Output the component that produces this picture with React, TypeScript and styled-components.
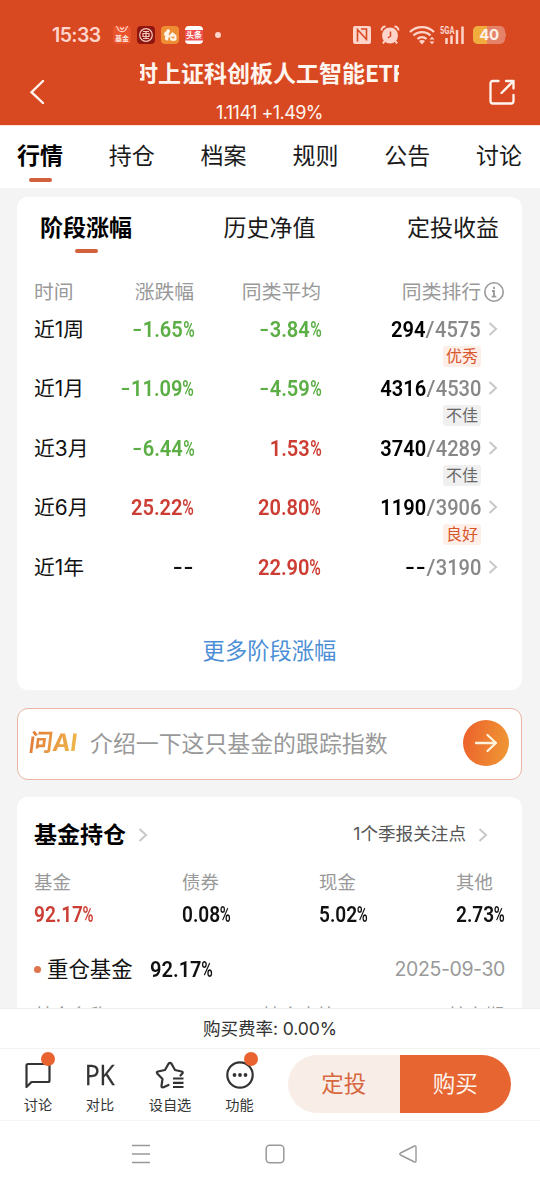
import React from "react";
import styled, { createGlobalStyle } from "styled-components";

const Global = createGlobalStyle`
  * { box-sizing: border-box; }
  body { margin: 0; background: #f4f4f4; font-family: Inter, "Noto Sans CJK SC", sans-serif; color: #111; }
  svg { display: block; flex: none; }
`;

const Screen = styled.div`
  width: 540px;
  height: 1187px;
  display: flex;
  flex-direction: column;
  overflow: hidden;
  white-space: nowrap;
`;

const Header = styled.header`
  height: 125px;
  flex: none;
  background: #d84922;
  color: #fff5ef;
`;
const StatusBar = styled.div`
  height: 56px;
  padding: 14px 33px 0 52px;
  display: flex;
  align-items: center;
  color: #ffd5cb;
`;
const Clock = styled.span`
  font: 600 19.5px/42px Inter, sans-serif;
  letter-spacing: -0.6px;
  width: 61px;
  padding-bottom: 1px;
`;
const AppIcons = styled.div`
  display: flex;
  align-items: center;
  gap: 6px;
`;
const StatusRight = styled.div`
  display: flex;
  align-items: center;
  margin-left: auto;
`;
const TitleBar = styled.div`
  height: 69px;
  padding: 0 25px 0 29px;
  display: flex;
  align-items: center;
  justify-content: space-between;
`;
const TitleBlock = styled.div`
  width: 259px;
  height: 69px;
  margin-left: 95px;
  margin-right: auto;
`;
const Title = styled.div`
  height: 34px;
  font: 700 23px/33px "Noto Sans CJK SC", sans-serif;
  overflow: hidden;
  text-indent: -5px;
`;
const Latin = styled.span`
  letter-spacing: -0.6px;
`;
const Quote = styled.div`
  padding-top: 5px;
  font-size: 18px;
  line-height: 35px;
  font-weight: 400;
  letter-spacing: -0.55px;
  text-align: center;
`;

const Tabs = styled.nav`
  height: 63px;
  flex: none;
  background: #fff;
  border-top: 1px solid #fde3d8;
  padding: 0 18px 0 17px;
  display: flex;
  justify-content: space-between;
`;
const Tab = styled.div<{ $active?: boolean; $top: number; $gap: number }>`
  padding-top: ${(p) => p.$top}px;
  display: flex;
  flex-direction: column;
  align-items: center;
  font-size: 23px;
  line-height: 30px;
  font-weight: ${(p) => (p.$active ? 700 : 400)};
  color: ${(p) => (p.$active ? "#000" : "#1a1a1a")};
  &::after {
    content: "";
    width: 23px;
    height: 4px;
    border-radius: 2px;
    margin-top: ${(p) => p.$gap}px;
    background: ${(p) => (p.$active ? "#d2603c" : "transparent")};
  }
`;

const Content = styled.main`
  flex: 1;
  min-height: 0;
  overflow: hidden;
  padding: 9px 18px 0 17px;
`;
const Card = styled.section<{ $height: number }>`
  height: ${(p) => p.$height}px;
  background: #fff;
  border-radius: 11px;
  overflow: hidden;
`;
const SubTabs = styled.div`
  display: flex;
  justify-content: space-between;
  padding: 0 23px;
  height: 78px;
`;

const TableHead = styled.div`
  display: grid;
  grid-template-columns: 43px 117px 127px 160px 24px;
  height: 33px;
  padding-left: 17px;
  align-items: center;
  font-size: 19.8px;
  line-height: 30px;
  color: #999;
  text-align: right;
  & > :first-child { text-align: left; }
  & > :last-child { justify-self: end; }
`;
const Row = styled.div`
  display: grid;
  grid-template-columns: 43px 117px 127px 160px 24px;
  grid-template-rows: 42px 17.4px;
  height: 59.4px;
  padding-left: 17px;
  align-items: center;
  justify-items: end;
`;
const Period = styled.div`
  font-size: 20.8px;
  line-height: 30px;
  padding-top: 2px;
  justify-self: start;
  color: #111;
`;
const Rank = styled.div`
  display: flex;
  justify-content: flex-end;
  transform: scaleX(0.9);
  transform-origin: right;
`;
const Badge = styled.span<{ $good?: boolean }>`
  grid-column: 4;
  justify-self: end;
  align-self: start;
  margin-top: -4px;
  height: 21px;
  width: 38px;
  border-radius: 3px;
  text-align: center;
  font-size: 16px;
  line-height: 20px;
  background: ${(p) => (p.$good ? "#fdeee8" : "#f0f0f0")};
  color: ${(p) => (p.$good ? "#d9562c" : "#666")};
`;
const Digits = styled.span<{ $color: string; $size: number; $weight: number; $origin: string }>`
  display: inline-flex;
  align-items: baseline;
  font-family: Roboto, sans-serif;
  font-weight: ${(p) => p.$weight};
  font-size: ${(p) => p.$size}px;
  line-height: 30px;
  color: ${(p) => p.$color};
  transform: ${(p) => (p.$origin === "none" ? "none" : "scaleX(0.9)")};
  transform-origin: ${(p) => (p.$origin === "none" ? "center" : p.$origin)};
`;
const Percent = styled.span`
  display: inline-block;
  width: 12.4px;
  transform: scaleX(0.78);
  transform-origin: left;
  text-align: left;
`;
const Dash = styled.span`
  display: inline-block;
  width: 12px;
  text-align: center;
  transform: scaleX(1.4);
  font-weight: 500;
`;
const Slash = styled.span`
  display: inline-block;
  margin: 0 1px;
  transform: scaleX(1.15);
`;
const ChevronCell = styled.div`
  justify-self: start;
  padding-left: 7px;
`;
const MoreLink = styled.div`
  margin-top: 28px;
  text-align: center;
  font-size: 22.3px;
  line-height: 36px;
  color: #4c8fd6;
`;

const AskBox = styled.div`
  height: 72px;
  margin: 18px 0 17px;
  border: 1px solid #e9b5a2;
  border-radius: 11px;
  background: #fff;
  display: flex;
  align-items: center;
  padding: 0 12px 2px 11px;
`;
const AskLogo = styled.div`
  width: 61px;
  font-size: 24px;
  font-weight: 700;
  line-height: 30px;
  letter-spacing: -0.2px;
  color: transparent;
  background: linear-gradient(100deg, #e27836, #eeb94c 80%);
  background-clip: text;
  -webkit-background-clip: text;
  transform: skewX(-7deg);
`;
const AskText = styled.div`
  font-size: 22.9px;
  line-height: 30px;
  color: #999;
  flex: 1;
  padding-top: 2px;
`;
const AskButton = styled.div`
  width: 46px;
  height: 46px;
  border-radius: 50%;
  background: linear-gradient(100deg, #ec5f2b, #f09a35);
  display: grid;
  place-items: center;
`;

const HoldHead = styled.div`
  height: 68px;
  padding: 8px 34px 0 17px;
  display: flex;
  align-items: center;
`;
const HoldTitle = styled.div`
  font-size: 23px;
  line-height: 30px;
  font-weight: 700;
  color: #000;
  margin-right: 12px;
`;
const HoldNote = styled.div`
  margin-left: auto;
  margin-right: 12px;
  padding-bottom: 3px;
  font-size: 17.6px;
  line-height: 26px;
  color: #555;
`;
const Stats = styled.div`
  display: flex;
  height: 80px;
  padding-left: 17px;
`;
const Stat = styled.div<{ $width: number }>`
  width: ${(p) => p.$width}px;
  flex: none;
  font-size: 18.4px;
  line-height: 35px;
  color: #999;
  display: flex;
  flex-direction: column;
  align-items: flex-start;
`;
const Heavy = styled.div`
  display: flex;
  align-items: center;
  height: 48px;
  padding: 0 17px;
  line-height: 30px;
`;
const Dot = styled.i`
  width: 7px;
  height: 7px;
  border-radius: 50%;
  background: #e0734c;
  margin-right: 6px;
`;
const HeavyName = styled.span`
  font-size: 21.4px;
  margin-right: 17px;
`;
const HeavyDate = styled.span`
  margin-left: auto;
  font-size: 19.5px;
  letter-spacing: -0.4px;
  color: #999;
`;
const ColumnNames = styled.div`
  display: flex;
  padding: 8px 18px 0 17px;
  font-size: 18.6px;
  line-height: 28px;
  color: #999;
  & > :nth-child(2) { margin-left: 154px; }
  & > :nth-child(3) { margin-left: auto; }
`;

const Fee = styled.div`
  height: 40px;
  flex: none;
  border-top: 1px solid #ededed;
  background: #fff;
  text-align: center;
  font-size: 17.6px;
  line-height: 39px;
  letter-spacing: -0.1px;
  color: #333;
`;
const Actions = styled.div`
  height: 72px;
  flex: none;
  border-top: 1px solid #f2f2f2;
  background: #fff;
  display: flex;
  padding-left: 7px;
`;
const Action = styled.div<{ $width: number }>`
  width: ${(p) => p.$width}px;
  display: flex;
  flex-direction: column;
  align-items: center;
  font-size: 14.2px;
  line-height: 20px;
  color: #333;
`;
const ActionIcon = styled.div`
  position: relative;
  height: 46px;
  padding-top: 6px;
  display: grid;
  place-items: center;
`;
const Notice = styled.i`
  position: absolute;
  top: 3px;
  right: -4px;
  width: 14px;
  height: 14px;
  border-radius: 50%;
  background: #e8632f;
`;
const PK = styled.span`
  font: 400 27.5px/30px "Open Sans", sans-serif;
  transform: scaleX(0.9);
  -webkit-text-stroke: 0.3px #333;
`;
const Buttons = styled.div`
  display: flex;
  width: 223px;
  height: 58px;
  margin: 6px 0 0 18px;
  border-radius: 29px;
  overflow: hidden;
`;
const Button = styled.div<{ $primary?: boolean }>`
  flex: 1;
  text-align: center;
  font-size: 22.5px;
  line-height: 58px;
  background: ${(p) => (p.$primary ? "#e76530" : "#f9ede8")};
  color: ${(p) => (p.$primary ? "#fff3ec" : "#d8683f")};
`;
const SystemNav = styled.div`
  height: 67px;
  flex: none;
  border-top: 1px solid #f5f5f5;
  background: #fff;
  display: flex;
  align-items: center;
  justify-content: space-between;
  padding: 0 122px 0 131px;
`;

const Chevron = () => (
  <svg width="10" height="16" viewBox="0 0 10 16" fill="none" stroke="#c8c8c8" strokeWidth="2">
    <path d="M1.500 2 8 8l-6.500 6" />
  </svg>
);

type NumProps = { value: string; color?: string; size?: number; weight?: number; origin?: string };
const Num = ({ value, color = "#111", size = 22.3, weight = 600, origin = "right" }: NumProps) => (
  <Digits $color={color} $size={size} $weight={weight} $origin={origin}>
    {value.split(/([-%/])/).filter(Boolean).map((part, i) => {
      if (part === "-") return <Dash key={i}>-</Dash>;
      if (part === "%") return <Percent key={i}>%</Percent>;
      if (part === "/") return <Slash key={i}>/</Slash>;
      return <span key={i}>{part}</span>;
    })}
  </Digits>
);

const GREEN = "#5aae44";
const RED = "#cc3d33";
const tone = (v: string) => (v === "--" ? "#111" : v.startsWith("-") ? GREEN : RED);

const rows = [
  { period: "近1周", change: "-1.65%", avg: "-3.84%", rank: "294", total: "4575", badge: "优秀", good: true },
  { period: "近1月", change: "-11.09%", avg: "-4.59%", rank: "4316", total: "4530", badge: "不佳" },
  { period: "近3月", change: "-6.44%", avg: "1.53%", rank: "3740", total: "4289", badge: "不佳" },
  { period: "近6月", change: "25.22%", avg: "20.80%", rank: "1190", total: "3906", badge: "良好", good: true },
  { period: "近1年", change: "--", avg: "22.90%", rank: "--", total: "3190" },
];

const stats = [
  { name: "基金", value: "92.17%", color: RED, width: 148 },
  { name: "债券", value: "0.08%", color: "#111", width: 137 },
  { name: "现金", value: "5.02%", color: "#111", width: 137 },
  { name: "其他", value: "2.73%", color: "#111", width: 60 },
];

const StatusIcons = () => (
  <>
    <AppIcons>
      <svg width="18" height="18" viewBox="0 0 18 18">
        <rect width="18" height="18" rx="4" fill="#e9532d" />
        <path d="M3 0l2.500 3M15 0l-2.500 3M4.500 1.500c1 5.500 8 5.500 9 0M7 1.500l2 2 2-2" fill="none" stroke="#ffd9cc" strokeWidth="1.100" />
        <text x="9" y="14.500" textAnchor="middle" fontSize="7" fontWeight="700" fill="#ffe6dd" fontFamily="Noto Sans CJK SC">基金</text>
      </svg>
      <svg width="18" height="18" viewBox="0 0 18 18" fill="none" stroke="#f3c9c0">
        <rect width="18" height="18" rx="4" fill="#8f160f" stroke="none" />
        <circle cx="9" cy="9" r="6.300" strokeWidth="1.200" />
        <path d="M6 5.500h6M6 12.500h6M6 7.500h6v3H6zM9 5.500v7" strokeWidth="1.200" />
      </svg>
      <svg width="18" height="18" viewBox="0 0 18 18">
        <rect width="18" height="18" rx="4" fill="#ef8d35" />
        <path d="M3 8c0-2 2-2 2.500-3.500C6 3 9 2.500 9 5c0 2-2 2.500-1 4s-1.500 3-.5 5.500C4 15 3 12 4.500 10.500 3.500 10 3 9 3 8zM8 9.500l3.500-3.500 4 3.500v4.500c-2 1.500-4 1-6 .5z" fill="#fff4e6" />
        <path d="M10.500 11.500h3" stroke="#ef8d35" strokeWidth="1.500" />
      </svg>
      <svg width="18" height="18" viewBox="0 0 18 18">
        <rect width="18" height="18" rx="4" fill="#fff" />
        <rect y="4" width="18" height="10.500" fill="#ee4f50" />
        <text x="9" y="12.300" textAnchor="middle" fontSize="8" fontWeight="700" fill="#fff" fontFamily="Noto Sans CJK SC">头条</text>
      </svg>
      <svg width="24" height="18" viewBox="0 0 24 18"><circle cx="9" cy="9" r="3" fill="#ffd5cb" /></svg>
    </AppIcons>
    <StatusRight>
      <svg width="18" height="18" viewBox="0 0 18 18" fill="none">
        <rect width="18" height="18" rx="2" fill="#ffd5cb" />
        <path d="M4.500 15.500V3.500l9 10M8 3h5.500v11.500" stroke="#d84922" strokeWidth="1.600" />
      </svg>
      <svg width="20" height="20" viewBox="0 0 20 20" fill="none" stroke="#ffd5cb" style={{ marginLeft: 9 }}>
        <circle cx="10" cy="10.500" r="8" fill="#ffd5cb" stroke="none" />
        <path d="M1.500 5.500c0-2.500 2-4 4-4M18.500 5.500c0-2.500-2-4-4-4M4.500 16l-1.500 2.500M15.500 16l1.500 2.500" strokeWidth="2" />
        <path d="M10.500 6.500V11l-2.500 2" stroke="#d84922" strokeWidth="1.500" />
      </svg>
      <svg width="26" height="20" viewBox="0 0 26 20" fill="none" stroke="#ffd5cb" strokeWidth="2.200" style={{ marginLeft: 9 }}>
        <path d="M1 7c6.500-6.500 17.500-6.500 24 0M4.500 10.500c4.500-4.500 12.500-4.500 17 0M8.500 14c2.500-2.500 6.500-2.500 9 0" />
        <path d="M10 16c2-1.500 4-1.500 6 0l-3 3.500zM20.500 14.500l2.500-2.800 2.500 2.800zM20.500 16.500l2.500 2.800 2.500-2.800z" fill="#ffd5cb" stroke="none" />
      </svg>
      <svg width="25" height="20" viewBox="0 0 25 20" style={{ marginLeft: 5 }}>
        <text x="0" y="8.500" fontSize="10.500" fontWeight="700" textLength="14.500" lengthAdjust="spacingAndGlyphs" fill="#ffd5cb" fontFamily="Roboto">5GA</text>
        <path d="M6.500 19v-6M11.500 19v-8.500M17 19V5M22.500 19V1.500" stroke="#ffd5cb" strokeWidth="2.500" />
      </svg>
      <svg width="34" height="18" viewBox="0 0 34 18" style={{ marginLeft: 8 }}>
        <rect width="32" height="18" rx="5" fill="#e4836a" />
        <path d="M5 0h9v18H5a5 5 0 0 1-5-5V5a5 5 0 0 1 5-5z" fill="#f0ac3c" />
        <path d="M32 6q2 3 0 6" fill="#e4836a" />
        <text x="16" y="14.300" textAnchor="middle" fontSize="15" fontWeight="700" letterSpacing="-.5" fill="#fff0e6" fontFamily="Inter">40</text>
      </svg>
    </StatusRight>
  </>
);

export default function App() {
  return (
    <Screen>
      <Global />
      <Header>
        <StatusBar>
          <Clock>15:33</Clock>
          <StatusIcons />
        </StatusBar>
        <TitleBar>
          <svg width="16" height="26" viewBox="0 0 16 26" fill="none" stroke="#fff5ef" strokeWidth="2.400" strokeLinecap="round">
            <path d="M14 3 2.500 14.200 14 25" />
          </svg>
          <TitleBlock>
            <Title>时上证科创板人工智能<Latin>ETF</Latin></Title>
            <Quote>1.1141 +1.49%</Quote>
          </TitleBlock>
          <svg width="26" height="28" viewBox="0 0 26 28" fill="none" stroke="#fff5ef" strokeWidth="2.300" strokeLinecap="round" strokeLinejoin="round">
            <path d="M9.500 4H4Q1.500 4 1.500 6.500V24q0 2.500 2.500 2.500h18q2.500 0 2.500-2.500v-6M17 4h7.500v7.500M24 4.500 12.500 16" />
          </svg>
        </TitleBar>
      </Header>

      <Tabs>
        {["行情", "持仓", "档案", "规则", "公告", "讨论"].map((t, i) => (
          <Tab key={t} $active={i === 0} $top={15} $gap={7}>{t}</Tab>
        ))}
      </Tabs>

      <Content>
        <Card $height={493}>
          <SubTabs>
            {["阶段涨幅", "历史净值", "定投收益"].map((t, i) => (
              <Tab key={t} $active={i === 0} $top={16} $gap={6}>{t}</Tab>
            ))}
          </SubTabs>
          <TableHead>
            <div>时间</div>
            <div>涨跌幅</div>
            <div>同类平均</div>
            <div>同类排行</div>
            <svg width="22" height="22" viewBox="0 0 22 22" fill="none" stroke="#999">
              <circle cx="11" cy="11" r="9.200" strokeWidth="1.600" />
              <path d="M11 5.800v2.200M9 10h2v6M8.700 15.700h4.600" strokeWidth="1.800" />
            </svg>
          </TableHead>
          {rows.map((r) => (
            <Row key={r.period}>
              <Period>{r.period}</Period>
              <Num value={r.change} color={tone(r.change)} />
              <Num value={r.avg} color={tone(r.avg)} />
              <Rank>
                <Num value={r.rank} color="#000" origin="none" />
                <Num value={"/" + r.total} color="#888" weight={500} origin="none" />
              </Rank>
              <ChevronCell><Chevron /></ChevronCell>
              {r.badge && <Badge $good={r.good}>{r.badge}</Badge>}
            </Row>
          ))}
          <MoreLink>更多阶段涨幅</MoreLink>
        </Card>

        <AskBox>
          <AskLogo>问AI</AskLogo>
          <AskText>介绍一下这只基金的跟踪指数</AskText>
          <AskButton>
            <svg width="24" height="22" viewBox="0 0 24 22" fill="none" stroke="#fff3dc" strokeWidth="2.300" strokeLinecap="round" strokeLinejoin="round">
              <path d="M2 11h20M13.500 3 22 11l-8.500 8" />
            </svg>
          </AskButton>
        </AskBox>

        <Card $height={260}>
          <HoldHead>
            <HoldTitle>基金持仓</HoldTitle>
            <Chevron />
            <HoldNote>1个季报关注点</HoldNote>
            <Chevron />
          </HoldHead>
          <Stats>
            {stats.map((s) => (
              <Stat key={s.name} $width={s.width}>
                {s.name}
                <Num value={s.value} color={s.color} size={21.2} origin="left" />
              </Stat>
            ))}
          </Stats>
          <Heavy>
            <Dot />
            <HeavyName>重仓基金</HeavyName>
            <Num value="92.17%" origin="left" />
            <HeavyDate>2025-09-30</HeavyDate>
          </Heavy>
          <ColumnNames>
            <span>基金名称</span>
            <span>持仓占比</span>
            <span>较上期</span>
          </ColumnNames>
        </Card>
      </Content>

      <Fee>购买费率: 0.00%</Fee>
      <Actions>
        <Action $width={62}>
          <ActionIcon>
            <svg width="26" height="28" viewBox="0 0 26 28" fill="none" stroke="#333" strokeWidth="2.200" strokeLinejoin="round">
              <path d="M3 3h20q1.500 0 1.500 1.500v15Q24.500 21 23 21H6.500L1.500 26V4.500Q1.500 3 3 3z" />
            </svg>
            <Notice />
          </ActionIcon>
          讨论
        </Action>
        <Action $width={62}>
          <ActionIcon><PK>PK</PK></ActionIcon>
          对比
        </Action>
        <Action $width={78}>
          <ActionIcon>
            <svg width="30" height="28" viewBox="0 0 30 28" fill="none" stroke="#333" strokeWidth="2.200" strokeLinejoin="round" strokeLinecap="round">
              <path d="M13.500 24 8.500 26.300Q6.300 26.800 6.500 24.800L7.500 18 2.200 12.500Q1.200 11 3 10.500L10 9l3.500-6.200q1.500-1.800 3 0L20 9l6.500 1.500q2 .5.800 2L25.500 14.500" />
              <path d="M18 17.500h10.500M18 21.800h10.500M18 26h10.500" strokeLinecap="butt" />
            </svg>
          </ActionIcon>
          设自选
        </Action>
        <Action $width={61}>
          <ActionIcon>
            <svg width="28" height="28" viewBox="0 0 28 28" fill="none" stroke="#333">
              <circle cx="14" cy="14" r="12.700" strokeWidth="2.200" />
              <g fill="#333" stroke="none"><circle cx="8.500" cy="14" r="1.900" /><circle cx="14" cy="14" r="1.900" /><circle cx="19.500" cy="14" r="1.900" /></g>
            </svg>
            <Notice />
          </ActionIcon>
          功能
        </Action>
        <Buttons>
          <Button>定投</Button>
          <Button $primary>购买</Button>
        </Buttons>
      </Actions>
      <SystemNav>
        <svg width="20" height="20" viewBox="0 0 20 20" stroke="#999" strokeWidth="1.600">
          <path d="M1 1.500h18M1 10h18M1 18.500h18" />
        </svg>
        <svg width="20" height="20" viewBox="0 0 20 20" fill="none" stroke="#999" strokeWidth="1.500">
          <rect x="1.200" y="1.200" width="17.600" height="17.600" rx="3.500" />
        </svg>
        <svg width="20" height="20" viewBox="0 0 20 20" fill="none" stroke="#999" strokeWidth="1.400" strokeLinejoin="round">
          <path d="M16.500 2Q18 1.500 18 3v14q0 1.500-1.500 1L2.500 11Q1 10 2.500 9z" />
        </svg>
      </SystemNav>
    </Screen>
  );
}
